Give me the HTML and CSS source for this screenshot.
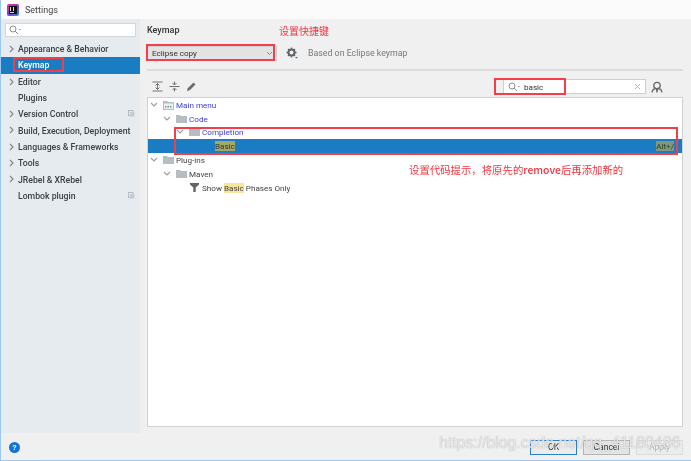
FILE: index.html
```html
<!DOCTYPE html>
<html lang="zh">
<head>
<meta charset="utf-8">
<title>Settings</title>
<link rel="stylesheet" href="styles.css">
</head>
<body>
<div class="window">
  <header class="titlebar">
    <svg class="logo" width="12" height="12" viewBox="0 0 12 12"><defs><linearGradient id="lg" x1="0" y1="0" x2="1" y2="1"><stop offset="0" stop-color="#f0308a"/><stop offset="0.5" stop-color="#7a3fd0"/><stop offset="1" stop-color="#2a8fe8"/></linearGradient></defs><rect width="12" height="12" rx="2" fill="url(#lg)"/><rect x="2" y="2" width="8" height="8" fill="#111"/><rect x="3" y="8" width="4" height="1" fill="#ddd"/><rect x="3" y="3" width="1" height="4" fill="#ddd"/><rect x="6" y="3" width="1" height="4" fill="#ddd"/></svg>
    <span class="title">Settings</span>
  </header>
  <div class="main">
    <aside class="sidebar">
      <div class="side-search">
        <svg width="12" height="10" viewBox="0 0 12 10"><circle cx="4" cy="4" r="3" fill="none" stroke="#8a8f94"/><path d="M6.2 6.2 9 9" stroke="#8a8f94"/><path d="M9.5 4h2.500l-1.250 1.300z" fill="#8a8f94"/></svg>
      </div>
      <nav class="side-list">
        <div class="side-row"><svg class="chev" viewBox="0 0 6 8"><path d="M1 1l3 3-3 3" fill="none" stroke="#858a8e" stroke-width="1.200"/></svg><span>Appearance &amp; Behavior</span></div>
        <div class="side-row selected"><span>Keymap</span></div>
        <div class="side-row"><svg class="chev" viewBox="0 0 6 8"><path d="M1 1l3 3-3 3" fill="none" stroke="#858a8e" stroke-width="1.200"/></svg><span>Editor</span></div>
        <div class="side-row"><span>Plugins</span></div>
        <div class="side-row"><svg class="chev" viewBox="0 0 6 8"><path d="M1 1l3 3-3 3" fill="none" stroke="#858a8e" stroke-width="1.200"/></svg><span>Version Control</span><svg class="copy" viewBox="0 0 7 7"><rect x="0.500" y="0.500" width="4.500" height="5" fill="none" stroke="#b4bbc2"/><rect x="2" y="2" width="4.500" height="4.500" fill="#c5cbd1"/></svg></div>
        <div class="side-row"><svg class="chev" viewBox="0 0 6 8"><path d="M1 1l3 3-3 3" fill="none" stroke="#858a8e" stroke-width="1.200"/></svg><span>Build, Execution, Deployment</span></div>
        <div class="side-row"><svg class="chev" viewBox="0 0 6 8"><path d="M1 1l3 3-3 3" fill="none" stroke="#858a8e" stroke-width="1.200"/></svg><span>Languages &amp; Frameworks</span></div>
        <div class="side-row"><svg class="chev" viewBox="0 0 6 8"><path d="M1 1l3 3-3 3" fill="none" stroke="#858a8e" stroke-width="1.200"/></svg><span>Tools</span></div>
        <div class="side-row"><svg class="chev" viewBox="0 0 6 8"><path d="M1 1l3 3-3 3" fill="none" stroke="#858a8e" stroke-width="1.200"/></svg><span>JRebel &amp; XRebel</span></div>
        <div class="side-row"><span>Lombok plugin</span><svg class="copy" viewBox="0 0 7 7"><rect x="0.500" y="0.500" width="4.500" height="5" fill="none" stroke="#b4bbc2"/><rect x="2" y="2" width="4.500" height="4.500" fill="#c5cbd1"/></svg></div>
      </nav>
    </aside>
    <section class="content">
      <h1 class="heading">Keymap</h1>
      <div class="scheme">
        <div class="combo"><span>Eclipse copy</span><svg width="7" height="5" viewBox="0 0 7 5"><path d="M1 1l2.500 2.500L6 1" fill="none" stroke="#8d8d8d"/></svg></div>
        <svg class="gear" width="12" height="12" viewBox="0 0 12 12"><circle cx="5.500" cy="5.500" r="3" fill="none" stroke="#5f6468" stroke-width="2"/><path d="M5.500 0.500v2M5.500 8.500v2M0.500 5.500h2M8.500 5.500h2M2 2l1.400 1.400M7.600 7.600 9 9M9 2 7.600 3.400M3.400 7.600 2 9" stroke="#5f6468" stroke-width="1.300"/><path d="M9 10h3l-1.500 1.500z" fill="#5f6468"/></svg>
        <span class="based">Based on Eclipse keymap</span>
      </div>
      <div class="divider"></div>
      <div class="toolbar">
        <div class="tools">
          <svg width="11" height="11" viewBox="0 0 11 11"><path d="M0.500 1h10M0.500 10h10M5.500 2.500v6M3.500 4.500l2-2 2 2M3.500 6.500l2 2 2-2" fill="none" stroke="#6e7276"/></svg>
          <svg width="11" height="11" viewBox="0 0 11 11"><path d="M0.500 5.500h10M5.500 0.500v3M5.500 7.500v3M3.500 2l2 2 2-2M3.500 9l2-2 2 2" fill="none" stroke="#6e7276"/></svg>
          <svg width="11" height="11" viewBox="0 0 11 11"><path d="M1 10l.7-2.800L7.500 1.500l2 2-5.700 5.800z" fill="#6a6e72"/></svg>
        </div>
        <div class="filter">
          <svg width="12" height="10" viewBox="0 0 12 10"><circle cx="4" cy="4" r="3" fill="none" stroke="#8a8f94"/><path d="M6.200 6.200 9 9" stroke="#8a8f94"/><path d="M9.500 4h2.500l-1.250 1.300z" fill="#8a8f94"/></svg>
          <span class="filter-text">basic</span>
          <svg class="clear" width="7" height="7" viewBox="0 0 7 7"><path d="M1 1l5 5M6 1 1 6" stroke="#b5b5b5"/></svg>
        </div>
        <svg class="shortcut" width="12" height="12" viewBox="0 0 12 12"><circle cx="6" cy="4.500" r="3.200" fill="none" stroke="#64686c" stroke-width="1.300"/><path d="M1 11.500c.4-2.500 1.500-3.500 3-3.800M11 11.500c-.4-2.500-1.500-3.500-3-3.800M5 7.500l1 3 1-3" fill="none" stroke="#64686c" stroke-width="1.300"/></svg>
      </div>
      <div class="tree">
        <div class="tree-row lvl0"><svg class="arrow" viewBox="0 0 8 6"><path d="M1 1l3 3 3-3" fill="none" stroke="#9a9ea2" stroke-width="1.100"/></svg><svg class="folder" viewBox="0 0 11 10"><path d="M0 1h4l1 1h6v8H0z" fill="#b6bdc3"/><rect x="1" y="3.500" width="9" height="5.500" fill="#eef0f2"/><rect x="2" y="6" width="1.500" height="1.500" fill="#d66"/><rect x="4.500" y="6" width="1.500" height="1.500" fill="#5a5"/><rect x="7" y="6" width="1.500" height="1.500" fill="#59c"/></svg><span class="link">Main menu</span></div>
        <div class="tree-row lvl1"><svg class="arrow" viewBox="0 0 8 6"><path d="M1 1l3 3 3-3" fill="none" stroke="#9a9ea2" stroke-width="1.100"/></svg><svg class="folder" viewBox="0 0 11 10"><path d="M0 1h4l1 1h6v7H0z" fill="#b6bdc3"/></svg><span class="link">Code</span></div>
        <div class="tree-row lvl2"><svg class="arrow" viewBox="0 0 8 6"><path d="M1 1l3 3 3-3" fill="none" stroke="#9a9ea2" stroke-width="1.100"/></svg><svg class="folder" viewBox="0 0 11 10"><path d="M0 1h4l1 1h6v7H0z" fill="#b6bdc3"/></svg><span class="link">Completion</span></div>
        <div class="tree-row selected lvl3"><mark class="hit-dark">Basic</mark><span class="keys">Alt+/</span></div>
        <div class="tree-row lvl0"><svg class="arrow" viewBox="0 0 8 6"><path d="M1 1l3 3 3-3" fill="none" stroke="#9a9ea2" stroke-width="1.100"/></svg><svg class="folder" viewBox="0 0 11 10"><path d="M0 1h4l1 1h6v7H0z" fill="#b6bdc3"/></svg><span>Plug-ins</span></div>
        <div class="tree-row lvl1"><svg class="arrow" viewBox="0 0 8 6"><path d="M1 1l3 3 3-3" fill="none" stroke="#9a9ea2" stroke-width="1.100"/></svg><svg class="folder" viewBox="0 0 11 10"><path d="M0 1h4l1 1h6v7H0z" fill="#b6bdc3"/></svg><span>Maven</span></div>
        <div class="tree-row lvl2b"><svg class="funnel" viewBox="0 0 9 9"><path d="M0 0h9v1.500L5.700 4.500V9H3.300V4.500L0 1.500z" fill="#5f6468"/></svg><span>Show <mark class="hit">Basic</mark> Phases Only</span></div>
      </div>
    </section>
  </div>
  <footer class="footer">
    <span class="help">?</span>
    <div class="buttons">
      <button class="btn primary">OK</button>
      <button class="btn">Cancel</button>
      <button class="btn disabled">Apply</button>
    </div>
  </footer>

  <div class="mark-box box-keymap"></div>
  <div class="mark-box box-combo"></div>
  <div class="mark-box box-search"></div>
  <div class="mark-box box-row"></div>
  <div class="note note-key">设置快捷键</div>
  <div class="note note-code">设置代码提示，将原先的<b class="note-latin">remove</b>后再添加新的</div>
  <div class="watermark">https://blog.csdn.net/qq_41180486</div>
</div>
</body>
</html>
```

FILE: styles.css
```css
* { box-sizing: border-box; }
html, body { margin: 0; padding: 0; }
body { width: 691px; height: 461px; overflow: hidden; background: #f0f0f0; }

.window {
  position: relative;
  width: 691px;
  height: 461px;
  display: flex;
  flex-direction: column;
  background: #f0f0f0;
  border-left: 1px solid #9cc8f5;
  border-bottom: 1px solid #9cc8f5;
  font-family: "Roboto", "Noto Sans", sans-serif;
  font-size: 8.100px;
  color: #2c2c2c;
  filter: blur(0.3px);
}

.titlebar {
  height: 19px;
  flex: none;
  display: flex;
  align-items: center;
  gap: 6px;
  padding-left: 6px;
  background: #fbfbfb;
}
.logo { flex: none; }
.title { font-size: 9px; color: #444; }

.main { flex: 1; display: flex; min-height: 0; }

.sidebar {
  width: 139px;
  flex: none;
  background: #e6ebf0;
  padding-top: 4px;
}
.side-search {
  height: 14px;
  margin: 0 4px;
  background: #fff;
  border: 1px solid #d3d7db;
  display: flex;
  align-items: center;
  padding-left: 3px;
}
.side-list { margin-top: 4px; display: flex; flex-direction: column; }
.side-row {
  height: 16.300px;
  display: flex;
  align-items: center;
  padding-left: 17px;
  position: relative;
  font-weight: 500;
  color: #3a3f44;
  font-size: 8.700px;
  white-space: nowrap;
}
.side-row .chev { position: absolute; left: 8px; top: 4px; width: 6px; height: 8px; }
.side-row .copy { position: absolute; right: 5px; top: 4px; width: 7px; height: 7px; }
.side-row.selected { background: #1a7cc2; color: #fff; }

.content {
  flex: 1;
  min-width: 0;
  padding: 0 8px 6px 7px;
  display: flex;
  flex-direction: column;
}
.heading { margin: 5px 0 0; height: 13px; font-size: 9px; line-height: 13px; font-weight: 500; color: #333; }
.scheme { display: flex; align-items: center; margin-top: 7px; height: 18px; }
.combo {
  width: 130px;
  height: 15px;
  background: #e3e3e3;
  border: 1px solid #cfcfcf;
  display: flex;
  align-items: center;
  justify-content: space-between;
  padding: 0 3px 0 4px;
  color: #333;
}
.gear { margin-left: 9px; }
.based { margin-left: 10px; color: #777; font-size: 8.800px; }
.divider { height: 2px; margin-top: 7px; background: #dcdcdc; }
.toolbar { display: flex; align-items: center; height: 21px; margin-top: 5px; }
.tools { display: flex; gap: 6px; margin-left: 5px; }
.filter {
  margin-left: auto;
  width: 143px;
  height: 15px;
  background: #fff;
  border: 1px solid #cfcfcf;
  display: flex;
  align-items: center;
  padding: 0 4px;
}
.filter-text { margin-left: 4px; color: #333; }
.clear { margin-left: auto; }
.shortcut { margin: 0 20px 0 5px; flex: none; }

.tree {
  flex: 1;
  background: #fff;
  border: 1px solid #cfd2d5;
}
.tree-row { height: 13.800px; display: flex; align-items: center; color: #444; }
.tree-row .arrow { width: 8px; height: 6px; flex: none; margin-right: 5px; }
.tree-row .folder { width: 11px; height: 10px; flex: none; margin-right: 2px; }
.lvl0 { padding-left: 2px; }
.lvl1 { padding-left: 15px; }
.lvl2 { padding-left: 28px; }
.lvl2b { padding-left: 42px; }
.lvl3 { padding: 0 8px 0 67px; }
.funnel { width: 9px; height: 9px; margin-right: 3px; flex: none; }
.link { color: #3b3be0; }
.tree-row.selected { background: #1a7cc2; }
.hit-dark { background: #a5a66a; color: #2e3a30; padding: 0; }
.hit { background: #fde49a; color: #444; padding: 0; }
.keys { margin-left: auto; background: #7f9a7a; color: #2e3a30; }

.footer {
  height: 27px;
  flex: none;
  display: flex;
  align-items: center;
  justify-content: space-between;
  padding: 0 8px;
}
.help {
  width: 11px;
  height: 11px;
  border-radius: 50%;
  background: #1473d6;
  color: #fff;
  font-size: 8px;
  font-weight: 700;
  line-height: 11px;
  text-align: center;
  margin-top: 2px;
}
.buttons { display: flex; gap: 6px; margin-top: 1px; }
.btn {
  height: 15px;
  width: 47px;
  padding: 0;
  font: inherit;
  font-size: 8.500px;
  border: 1px solid #b5b5b5;
  background: #e4e4e4;
  color: #333;
}
.btn.primary { border: 1px solid #2a7fd0; background: #ececec; }
.btn.disabled { background: #ececec; border-color: #dcdcdc; color: #b5b5b5; }

.mark-box { position: absolute; border: 2px solid #f2404a; }
.box-keymap { left: 12px; top: 57px; width: 51px; height: 15px; }
.box-combo { left: 145px; top: 44px; width: 129px; height: 17px; }
.box-search { left: 493px; top: 78px; width: 72px; height: 17px; }
.box-row { left: 173px; top: 127px; width: 504px; height: 28px; }
.note { position: absolute; color: #f5333f; font-family: "Noto Sans CJK SC", "Open Sans", sans-serif; font-size: 10px; white-space: nowrap; }
.note-key { left: 278px; top: 23px; }
.note-code { left: 408px; top: 162px; font-size: 10.400px; }
.note-latin { font-weight: 500; }
.watermark {
  position: absolute;
  left: 438px;
  top: 434px;
  font-family: "Liberation Sans", sans-serif;
  font-size: 15.800px;
  color: rgba(255, 255, 255, 0.75);
  text-shadow: 0 0 1px rgba(120, 120, 120, 0.8);
  white-space: nowrap;
}
```
